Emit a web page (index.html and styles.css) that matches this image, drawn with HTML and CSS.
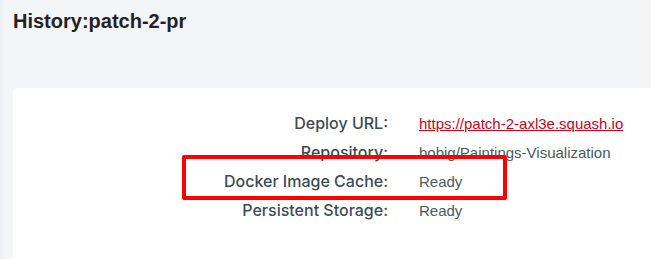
FILE: index.html
```html
<!DOCTYPE html>
<html lang="en">
<head>
  <meta charset="UTF-8" />
  <title>History: patch-2-pr</title>
  <link rel="stylesheet" href="styles.css">
</head>
<body>
  <h1 class="heading">History:patch-2-pr</h1>
  <div class="card">
    <div class="details">
      <div class="label">Deploy URL:</div>
      <div class="value"><a href="#">https://patch-2-axl3e.squash.io</a></div>
      <div class="label">Repository:</div>
      <div class="value">bobig/Paintings-Visualization</div>
      <div class="label">Docker Image Cache:</div>
      <div class="value">Ready</div>
      <div class="label">Persistent Storage:</div>
      <div class="value">Ready</div>
    </div>
    <div class="highlight"></div>
  </div>
</body>
</html>
```

FILE: styles.css
```css
body {
  margin: 0;
  font-family: 'Liberation Sans', Arial, sans-serif;
  background: linear-gradient(to right, #eceef1 0, #f4f5f7 6px);
  color: #3c4b54;
  height: 259px;
  overflow: hidden;
}
.heading {
  margin: 0;
  padding: 9px 0 0 13px;
  font-size: 20px;
  line-height: 24px;
  font-weight: bold;
  color: #1f2328;
}
.card {
  position: relative;
  margin: 55px 0 0 13px;
  background: #fff;
  border-radius: 4px 0 0 0;
  height: 150px;
  padding-top: 21px;
}
.details {
  display: grid;
  grid-template-columns: 375px auto;
  column-gap: 31px;
  line-height: 29px;
}
.label {
  text-align: right;
  font-family: Inter, 'Liberation Sans', sans-serif;
  font-size: 16px;
  font-weight: 500;
  color: #3c4b54;
}
.value {
  font-size: 15px;
  color: #4a5a63;
}
.value a {
  color: #d0021b;
}
.highlight {
  position: absolute;
  left: 169px;
  top: 67px;
  width: 317px;
  height: 37px;
  border: 4px solid #ff0000;
  border-radius: 2px;
}
```
